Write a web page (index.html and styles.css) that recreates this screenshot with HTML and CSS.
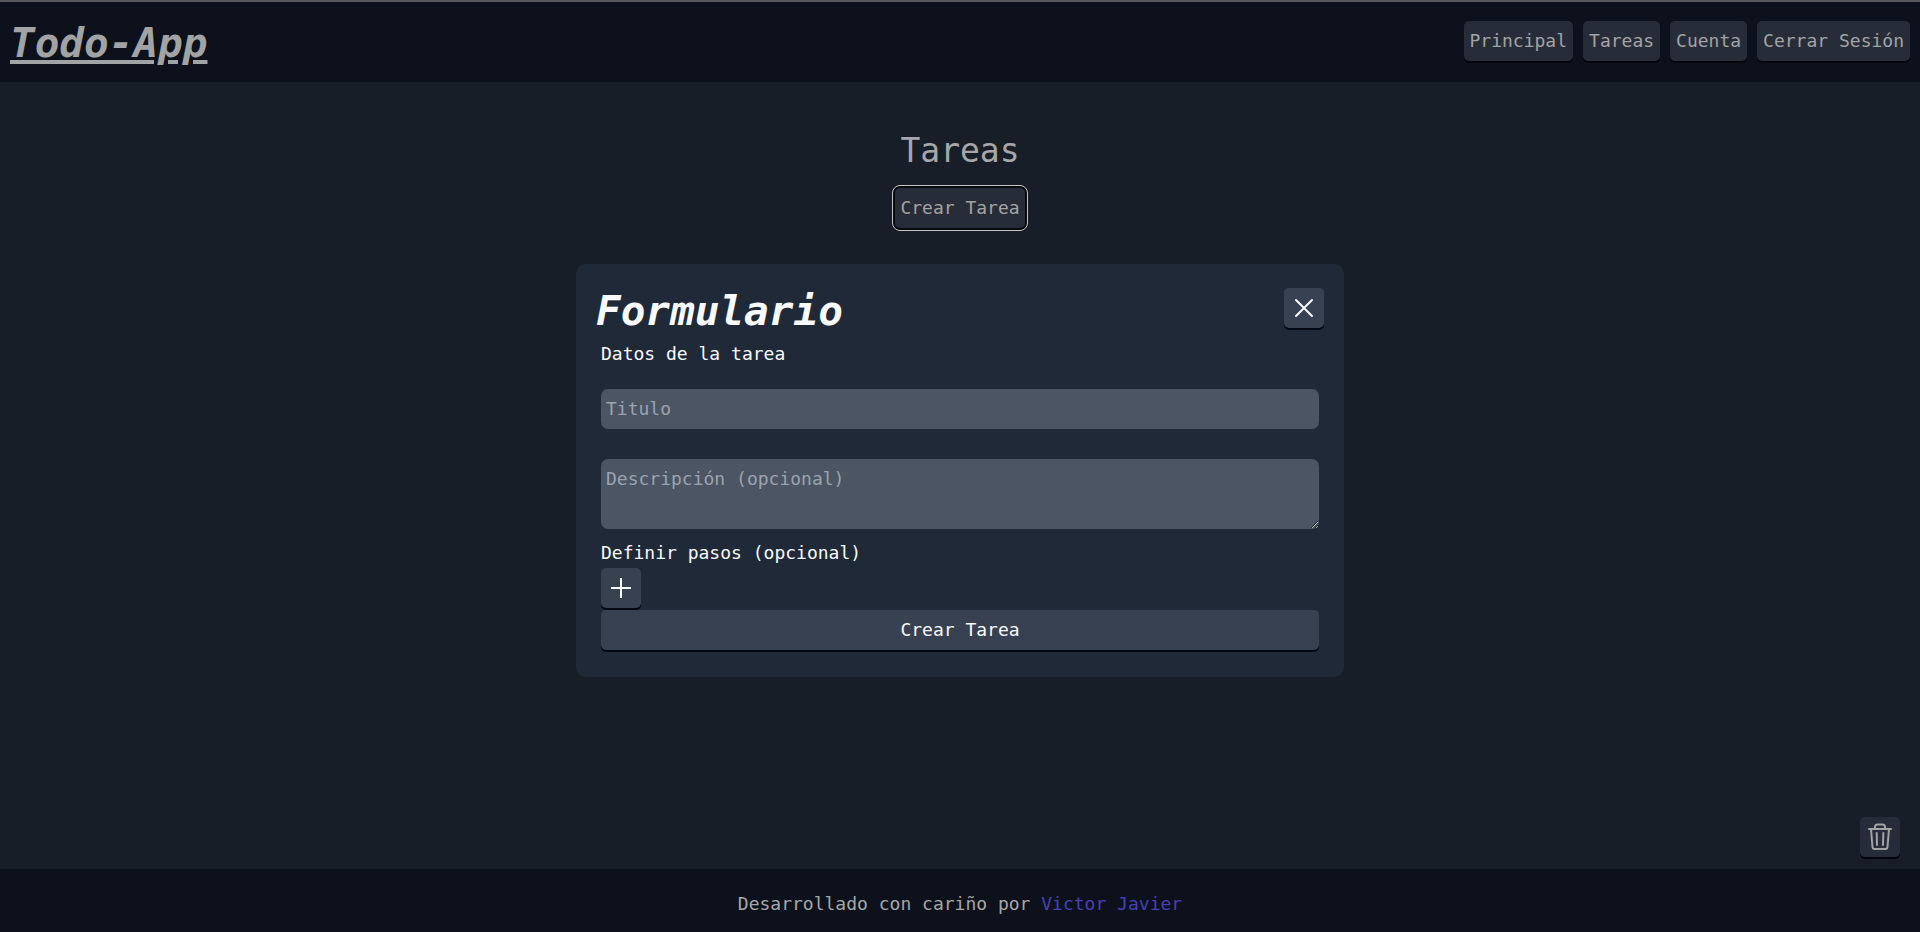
FILE: index.html
```html
<!DOCTYPE html>
<html lang="es">
<head>
<meta charset="utf-8">
<title>Todo-App</title>
<link rel="stylesheet" href="styles.css">
</head>
<body>
<header class="topbar">
  <a class="brand" href="#">Todo-App</a>
  <nav class="menu">
    <a class="btn btn-muted" href="#">Principal</a>
    <a class="btn btn-muted" href="#">Tareas</a>
    <a class="btn btn-muted" href="#">Cuenta</a>
    <button class="btn btn-muted" type="button">Cerrar Sesión</button>
  </nav>
</header>
<main class="content">
  <h1 class="page-title">Tareas</h1>
  <button class="btn btn-muted btn-focus" type="button">Crear Tarea</button>
  <form class="dialog">
    <div class="dialog-head">
      <h2 class="dialog-title">Formulario</h2>
      <button class="btn btn-icon" type="button" aria-label="Cerrar">
        <svg width="32" height="32" viewBox="0 0 32 32" fill="none" stroke="currentColor" stroke-width="2" stroke-linecap="round"><path d="M8 8l16 16M24 8L8 24"/></svg>
      </button>
    </div>
    <div class="fields">
      <label class="label" for="titulo">Datos de la tarea</label>
      <input class="field" id="titulo" type="text" placeholder="Titulo">
      <textarea class="field area" rows="2" aria-label="Descripción" placeholder="Descripción (opcional)"></textarea>
      <p class="label steps-label">Definir pasos (opcional)</p>
      <button class="btn btn-icon" type="button" aria-label="Agregar paso">
        <svg width="32" height="32" viewBox="0 0 32 32" fill="none" stroke="currentColor" stroke-width="2"><path d="M16 6v20M6 16h20"/></svg>
      </button>
      <button class="btn submit" type="submit">Crear Tarea</button>
    </div>
  </form>
  <button class="btn btn-icon btn-muted trash" type="button" aria-label="Eliminar tareas">
    <svg width="32" height="32" viewBox="0 0 32 32" fill="none" stroke="currentColor" stroke-width="2" stroke-linecap="round" stroke-linejoin="round"><path d="M5 8h22M7 8l1.500 18q.2 2 2 2h11q1.800 0 2-2L25 8M11 7V6q0-2.500 2.500-2.500h5Q21 3.500 21 6v1M12.700 12l.3 12M19.300 12l-.3 12"/></svg>
  </button>
</main>
<footer class="footer">
  <p>Desarrollado con cariño por <a class="author" href="#">Victor Javier</a></p>
</footer>
</body>
</html>
```
FILE: styles.css
```css
* {
  box-sizing: border-box;
}

body {
  margin: 0;
  min-height: 100vh;
  display: flex;
  flex-direction: column;
  background: #171e27;
  color: #a7a7a9;
  font-family: "DejaVu Sans Mono", "Liberation Mono", monospace;
  font-size: 18px;
  line-height: 30px;
}

h1, h2, p {
  margin: 0;
}

.topbar {
  display: flex;
  justify-content: space-between;
  align-items: flex-start;
  padding: 10px 10px 8px;
  border-top: 2px solid #56575b;
  background: #0c111b;
}

.brand {
  color: #a2a3a5;
  font-size: 41px;
  line-height: 62px;
  font-weight: bold;
  font-style: italic;
  text-decoration: underline;
  text-decoration-thickness: 4px;
  text-underline-offset: 3px;
}

.menu {
  display: flex;
  gap: 10px;
  padding-top: 9px;
}

.btn {
  height: 40px;
  padding: 0 6px 1px;
  border: 0;
  border-radius: 5px;
  background: #374151;
  box-shadow: 0 2px 0 #030712;
  color: #f9fafb;
  font: inherit;
  line-height: 39px;
  text-decoration: none;
}

.btn-muted {
  background: #272d38;
  box-shadow: 0 2px 0 #02050c;
  color: #a2a3a5;
}

.btn-icon {
  display: flex;
  align-items: center;
  justify-content: center;
  width: 40px;
  padding: 0;
}

.content {
  position: relative;
  flex: 1;
  display: flex;
  flex-direction: column;
  align-items: center;
  padding: 40px 0;
}

.page-title {
  font-size: 33px;
  line-height: 58px;
  font-weight: normal;
}

.btn-focus {
  margin-top: 8px;
  padding: 0 5px 2px;
  outline: 1px solid #c4c4c5;
  outline-offset: 2px;
  box-shadow: 0 0 0 2px #07090c;
}

.dialog {
  width: 40%;
  margin-top: 36px;
  padding: 20px 20px 27px;
  border-radius: 10px;
  background: #1f2937;
  color: #f9fafb;
}

.dialog-head {
  display: flex;
  justify-content: space-between;
  align-items: flex-start;
  padding-top: 4px;
}

.dialog-title {
  font-size: 41px;
  line-height: 46px;
  font-style: italic;
}

.fields {
  display: flex;
  flex-direction: column;
  align-items: flex-start;
  padding: 0 5px;
}

.label {
  line-height: 40px;
}

.steps-label {
  padding-top: 9px;
  line-height: 30px;
}

.field {
  width: 100%;
  height: 40px;
  margin-top: 15px;
  padding: 5px 5px 7px;
  border: 0;
  border-radius: 7px;
  background: #4b5563;
  color: #f9fafb;
  font: inherit;
}

.field::placeholder {
  color: #9ca3af;
  opacity: 1;
}

.area {
  height: 70px;
  margin-top: 30px;
  resize: vertical;
}

.submit {
  width: 100%;
  margin-top: 2px;
}

.trash {
  position: absolute;
  right: 20px;
  bottom: 12px;
}

.footer {
  padding: 20px 10px 13px;
  background: #0c111b;
  text-align: center;
}

.author {
  color: #4840b8;
  text-decoration: none;
}
```
